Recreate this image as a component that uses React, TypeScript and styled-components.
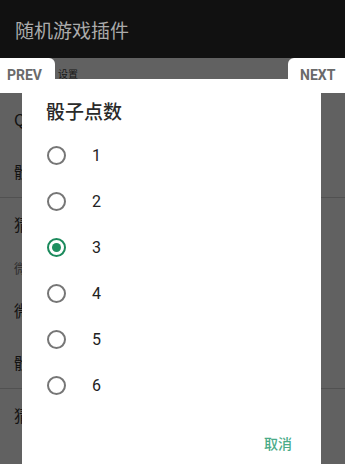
import styled, { createGlobalStyle } from 'styled-components'
import { FC, useState } from 'react'

const GlobalStyle = createGlobalStyle`
  html, body {
    margin: 0;
    padding: 0;
    background: #ffffff;
  }

  body {
    font-family: Roboto, "Noto Sans CJK SC", sans-serif;
  }
`

const Frame = styled.div`
  position: relative;
  width: 345px;
  height: 464px;
  overflow: hidden;
  background: #ffffff;
`

const AppBar = styled.header`
  display: flex;
  align-items: center;
  height: 58px;
  padding: 0 15px;
  box-sizing: border-box;
  background: #111111;
`

const AppTitle = styled.h1`
  margin: 0;
  font-family: "Noto Sans CJK SC", sans-serif;
  font-size: 19px;
  font-weight: 400;
  color: #ababab;
`

const Body = styled.div`
  position: relative;
  height: 406px;
`

const TabRow = styled.div`
  display: flex;
  align-items: stretch;
  height: 35px;
`

const TabButton = styled.div<{ $side: 'left' | 'right' }>`
  position: relative;
  z-index: 3;
  display: flex;
  align-items: center;
  width: ${p => (p.$side === 'left' ? '55px' : '57px')};
  padding: ${p => (p.$side === 'left' ? '0 0 2px 7px' : '0 0 2px 12px')};
  box-sizing: border-box;
  background: #ffffff;
  border-radius: ${p => (p.$side === 'left' ? '0 6px 0 0' : '6px 0 0 0')};
  font-family: Roboto, sans-serif;
  font-size: 14px;
  font-weight: 700;
  color: #6a6a6a;
`

const TabCaption = styled.div`
  flex: 1;
  display: flex;
  align-items: center;
  padding: 0 0 4px 3px;
  font-family: "Noto Sans CJK SC", sans-serif;
  font-size: 10px;
  color: #444444;
`

const List = styled.div`
  display: flex;
  flex-direction: column;
`

const ListItem = styled.div`
  display: flex;
  align-items: center;
  height: 52px;
  padding-left: 14px;
  font-family: "Noto Sans CJK SC", sans-serif;
  font-size: 16px;
  color: #333333;
`

const SubHeader = styled(ListItem)`
  height: 34px;
  font-size: 13px;
  color: #777777;
`

const Divider = styled.div`
  height: 1px;
  background: #d6d6d6;
`

const Scrim = styled.div`
  position: absolute;
  inset: 0;
  z-index: 1;
  background: rgba(0, 0, 0, 0.62);
`

const Dialog = styled.div`
  position: absolute;
  z-index: 2;
  top: 21px;
  left: 22px;
  width: 299px;
  bottom: -20px;
  display: flex;
  flex-direction: column;
  background: #ffffff;
  border-radius: 2px;
`

const DialogTitle = styled.h2`
  margin: 0;
  padding: 20px 24px 9px 24px;
  line-height: 24px;
  font-family: "Noto Sans CJK SC", sans-serif;
  font-size: 19px;
  font-weight: 500;
  color: #2a2a2a;
`

const Options = styled.div`
  display: flex;
  flex-direction: column;
`

const Option = styled.label`
  display: flex;
  align-items: center;
  gap: 26px;
  height: 46px;
  padding-left: 25px;
  cursor: pointer;
  font-family: Roboto, sans-serif;
  font-size: 16px;
  color: #222222;
`

const Radio = styled.span<{ $checked: boolean }>`
  position: relative;
  width: 19px;
  height: 19px;
  box-sizing: border-box;
  border-radius: 50%;
  border: 2px solid ${p => (p.$checked ? '#1b8a5c' : '#767676')};

  &::after {
    content: '';
    position: absolute;
    top: 3px;
    left: 3px;
    width: 9px;
    height: 9px;
    border-radius: 50%;
    background: #1e8f60;
    display: ${p => (p.$checked ? 'block' : 'none')};
  }
`

const Actions = styled.div`
  display: flex;
  justify-content: flex-end;
  padding: 17px 21px 0 0;
`

const TextButton = styled.button`
  height: 36px;
  padding: 0 8px;
  border: none;
  background: transparent;
  cursor: pointer;
  font-family: "Noto Sans CJK SC", sans-serif;
  font-size: 14px;
  font-weight: 500;
  color: #4aab88;
`

const faces = [1, 2, 3, 4, 5, 6]

const App: FC = () => {
    const [value, setValue] = useState<number>(3)

    return (
        <Frame>
            <GlobalStyle />
            <AppBar>
                <AppTitle>随机游戏插件</AppTitle>
            </AppBar>
            <Body>
                <TabRow>
                    <TabButton $side={'left'}>PREV</TabButton>
                    <TabCaption>设置</TabCaption>
                    <TabButton $side={'right'}>NEXT</TabButton>
                </TabRow>
                <List>
                    <ListItem>Q</ListItem>
                    <ListItem>骰</ListItem>
                    <Divider />
                    <ListItem>猜</ListItem>
                    <SubHeader>微</SubHeader>
                    <ListItem>微</ListItem>
                    <ListItem>骰</ListItem>
                    <Divider />
                    <ListItem>猜</ListItem>
                </List>
                <Scrim />
                <Dialog>
                    <DialogTitle>骰子点数</DialogTitle>
                    <Options>
                        {faces.map(face => (
                            <Option key={face} onClick={() => setValue(face)}>
                                <Radio $checked={face === value} />
                                {face}
                            </Option>
                        ))}
                    </Options>
                    <Actions>
                        <TextButton type={'button'}>取消</TextButton>
                    </Actions>
                </Dialog>
            </Body>
        </Frame>
    )
}

export default App
